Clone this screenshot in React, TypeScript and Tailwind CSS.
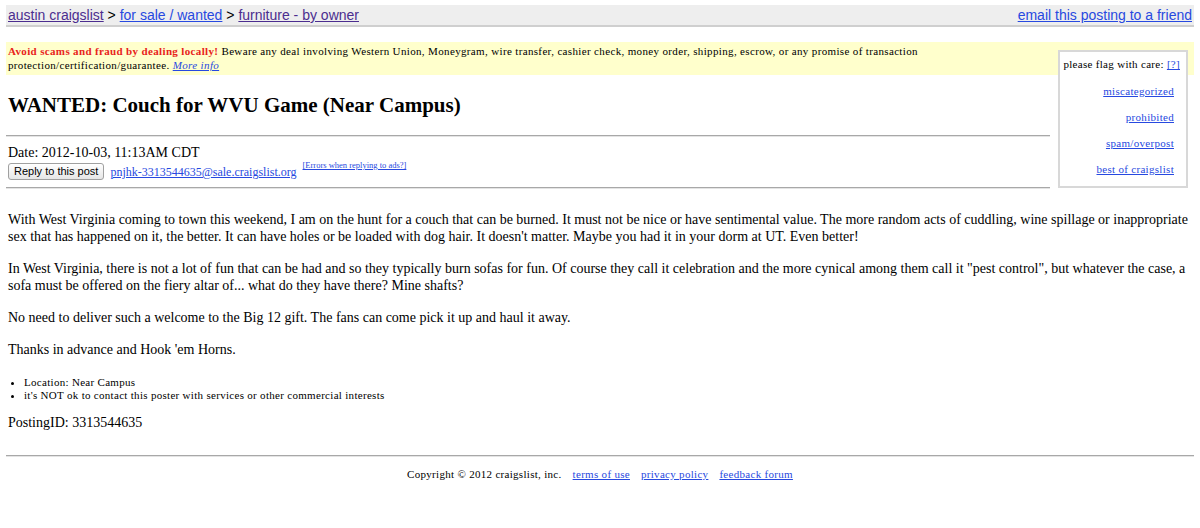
import React from "react";

const serif = "font-['Liberation_Serif','Times_New_Roman',serif]";
const sans = "font-['Liberation_Sans',Arial,sans-serif]";

const Rule = () => (
  <hr className="overflow-hidden border-0 border-t border-t-[#a8a8a8] border-b border-b-[#e4e4e4] h-[2px]" />
);

const FlagBox = () => {
  const flags = ["miscategorized", "prohibited", "spam/overpost", "best of craigslist"];
  return (
    <div className="float-right mt-[6px] ml-[8px] mr-[4px] w-[130px] h-[138px] bg-white border-2 border-[#d8d8d8] text-[11px] leading-[13px] tracking-[0.3px] pt-[6px] pr-[6px] text-right">
      <div className="text-black">
        please flag with care: <a href="#" className="text-[#2749e0] underline">[?]</a>
      </div>
      <div className="flex flex-col items-end gap-[13px] mt-[14px] pr-[6px]">
        {flags.map((f) => (
          <a key={f} href="#" className="text-[#2749e0] underline">
            {f}
          </a>
        ))}
      </div>
    </div>
  );
};

export default function App() {
  return (
    <div className={`min-h-[528px] bg-white text-black px-[6px] pt-[5px] ${serif}`}>
      {/* breadcrumb bar */}
      <div className={`h-[22px] bg-[#eeeeee] border-b-2 border-[#cfcfcf] flex items-center justify-between px-[2px] text-[14px] leading-[16px] ${sans}`}>
        <div>
          <a href="#" className="text-[#4b2d8f] underline">austin craigslist</a>
          {" > "}
          <a href="#" className="text-[#2749e0] underline">for sale / wanted</a>
          {" > "}
          <a href="#" className="text-[#4b2d8f] underline">furniture - by owner</a>
        </div>
        <a href="#" className="text-[#2749e0] underline">email this posting to a friend</a>
      </div>

      {/* scam warning */}
      <div className="mt-[15px] bg-[#ffffcc] text-[11px] leading-[14px] tracking-[0.35px] pt-[2px] pb-[3px] px-[2px]">
        <FlagBox />
        <b className="text-[#e8231b]">Avoid scams and fraud by dealing locally!</b> Beware any deal involving Western
        Union, Moneygram, wire transfer, cashier check, money order, shipping, escrow, or any promise of transaction
        <br />
        protection/certification/guarantee.{" "}
        <a href="#" className="italic text-[#2749e0] underline">More info</a>
      </div>

      <h2 className="mt-[18px] text-[21px] leading-[24px] font-bold px-[2px]">WANTED: Couch for WVU Game (Near Campus)</h2>

      <div className="mt-[18px]">
        <Rule />
      </div>

      <div className="mt-[7px] px-[2px] text-[14px] leading-[17px]">Date: 2012-10-03, 11:13AM CDT</div>
      <div className="mt-[2px] px-[2px] flex items-start gap-[6px]">
        <button className={`h-[17px] px-[5px] rounded-[3px] border border-[#a0a0a0] bg-gradient-to-b from-white to-[#e6e6e6] text-[11px] leading-[15px] ${sans}`}>
          Reply to this post
        </button>
        <a href="#" className="text-[12px] leading-[15px] mt-[2px] text-[#2749e0] underline">
          pnjhk-3313544635@sale.craigslist.org
        </a>
        <sup className="text-[8.5px] leading-[10px] mt-[1px]">
          <a href="#" className="text-[#2749e0] underline">[Errors when replying to ads?]</a>
        </sup>
      </div>

      <div className="mt-[7px]">
        <Rule />
      </div>

      {/* posting body */}
      <div className="mt-[22px] px-[2px] text-[14px] leading-[17px]">
        <p className="mb-[15px]">
          With West Virginia coming to town this weekend, I am on the hunt for a couch that can be burned. It must not be
          nice or have sentimental value. The more random acts of cuddling, wine spillage or inappropriate
          <br />
          sex that has happened on it, the better. It can have holes or be loaded with dog hair. It doesn't matter. Maybe
          you had it in your dorm at UT. Even better!
        </p>
        <p className="mb-[15px]">
          In West Virginia, there is not a lot of fun that can be had and so they typically burn sofas for fun. Of course
          they call it celebration and the more cynical among them call it "pest control", but whatever the case, a
          <br />
          sofa must be offered on the fiery altar of... what do they have there? Mine shafts?
        </p>
        <p className="mb-[15px]">
          No need to deliver such a welcome to the Big 12 gift. The fans can come pick it up and haul it away.
        </p>
        <p>Thanks in advance and Hook 'em Horns.</p>
      </div>

      <ul className="mt-[18px] list-disc pl-[18px] text-[11px] leading-[13px] tracking-[0.3px]">
        <li>Location: Near Campus</li>
        <li>it's NOT ok to contact this poster with services or other commercial interests</li>
      </ul>

      <div className="mt-[12px] px-[2px] text-[14px] leading-[17px]">PostingID: 3313544635</div>

      <div className="mt-[24px]">
        <Rule />
      </div>

      <div className="mt-[11px] flex justify-center gap-[11px] text-[11px] leading-[13px] tracking-[0.3px]">
        <span>Copyright © 2012 craigslist, inc.</span>
        <a href="#" className="text-[#2749e0] underline">terms of use</a>
        <a href="#" className="text-[#2749e0] underline">privacy policy</a>
        <a href="#" className="text-[#2749e0] underline">feedback forum</a>
      </div>
    </div>
  );
}
